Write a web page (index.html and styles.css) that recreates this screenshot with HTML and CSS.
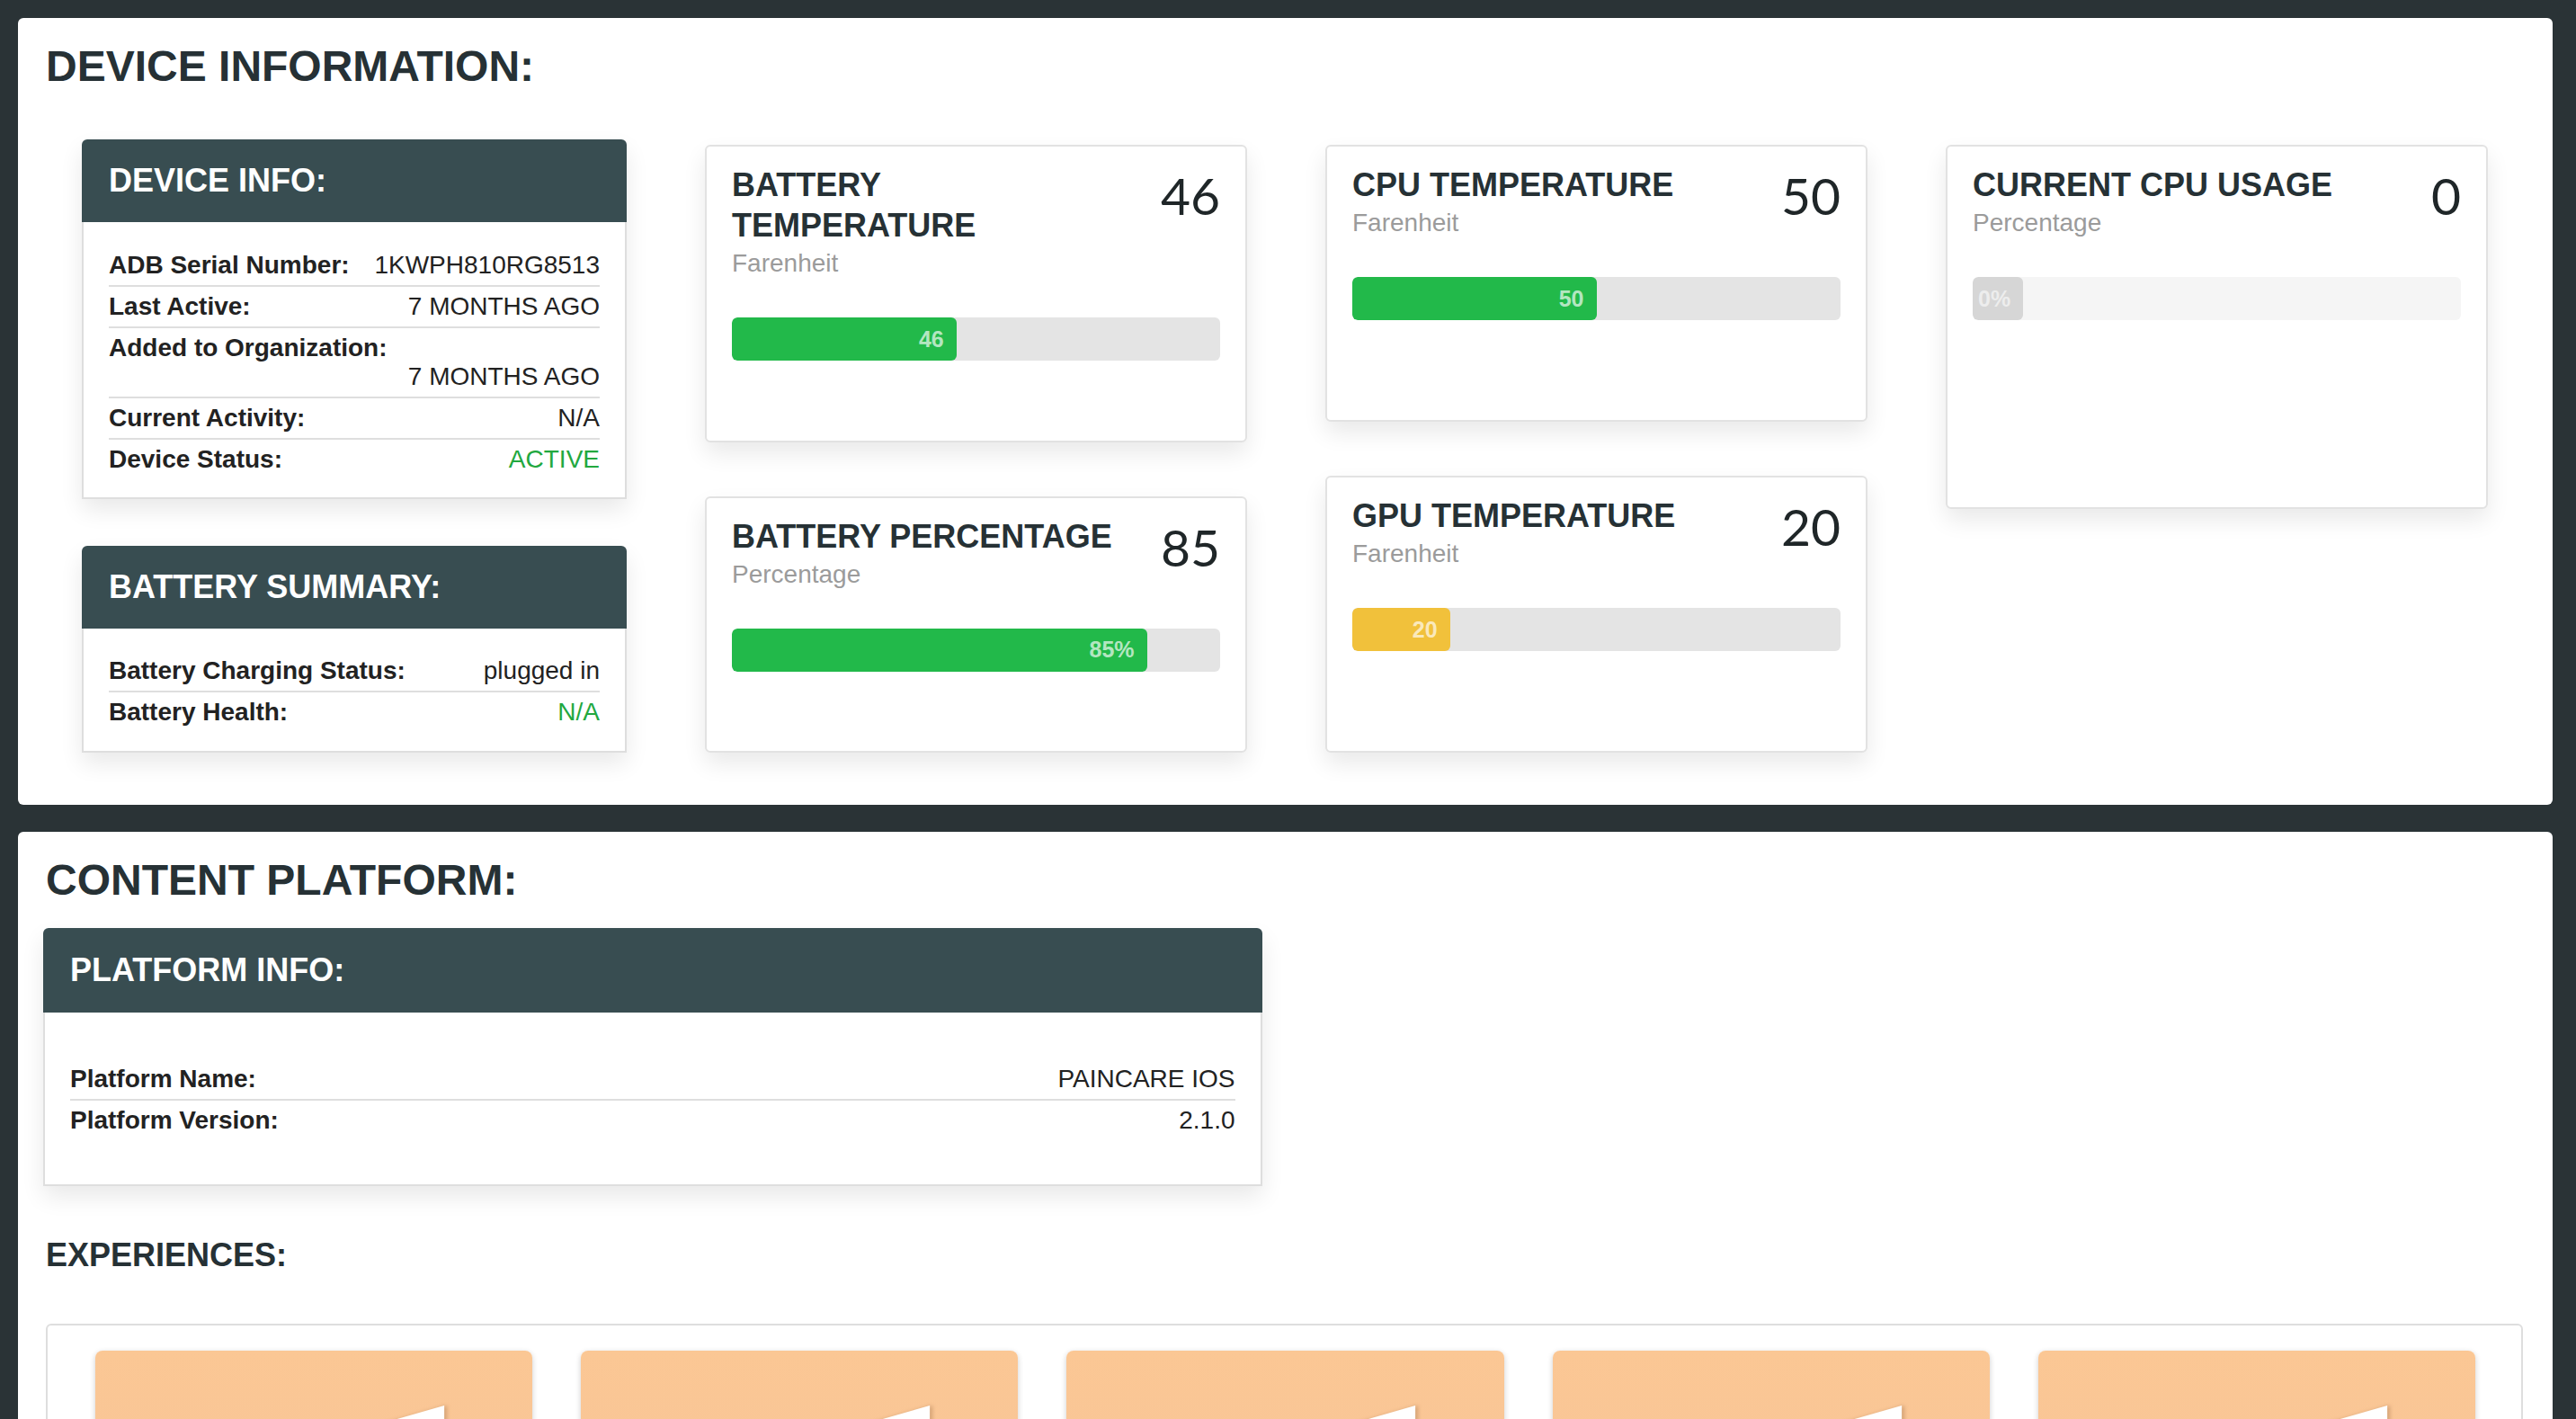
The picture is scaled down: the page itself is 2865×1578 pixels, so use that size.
FILE: index.html
```html
<!DOCTYPE html>
<html lang="en">
<head>
<meta charset="utf-8">
<title>Device</title>
<link rel="stylesheet" href="styles.css">
</head>
<body>
<main class="page">
  <section class="panel panel-device">
    <h1 class="panel-title">DEVICE INFORMATION:</h1>
    <div class="device-grid">
      <div class="col col-info">
        <div class="info-card">
          <div class="info-head">DEVICE INFO:</div>
          <div class="info-body">
            <div class="kv"><span class="k">ADB Serial Number:</span><span class="v">1KWPH810RG8513</span></div>
            <div class="kv"><span class="k">Last Active:</span><span class="v">7 MONTHS AGO</span></div>
            <div class="kv kv-wrap"><span class="k">Added to Organization:</span><span class="v">7 MONTHS AGO</span></div>
            <div class="kv"><span class="k">Current Activity:</span><span class="v">N/A</span></div>
            <div class="kv"><span class="k">Device Status:</span><span class="v v-green">ACTIVE</span></div>
          </div>
        </div>
        <div class="info-card">
          <div class="info-head">BATTERY SUMMARY:</div>
          <div class="info-body info-body-tight">
            <div class="kv"><span class="k">Battery Charging Status:</span><span class="v">plugged in</span></div>
            <div class="kv"><span class="k">Battery Health:</span><span class="v v-green">N/A</span></div>
          </div>
        </div>
      </div>

      <div class="col">
        <div class="metric">
          <div class="metric-head">
            <div class="metric-text">
              <div class="metric-title">BATTERY TEMPERATURE</div>
              <div class="metric-unit">Farenheit</div>
            </div>
            <div class="metric-value">46</div>
          </div>
          <div class="bar"><div class="bar-fill" style="width:46%">46</div></div>
        </div>
        <div class="metric">
          <div class="metric-head">
            <div class="metric-text">
              <div class="metric-title">BATTERY PERCENTAGE</div>
              <div class="metric-unit">Percentage</div>
            </div>
            <div class="metric-value">85</div>
          </div>
          <div class="bar"><div class="bar-fill" style="width:85%">85%</div></div>
        </div>
      </div>

      <div class="col">
        <div class="metric">
          <div class="metric-head">
            <div class="metric-text">
              <div class="metric-title">CPU TEMPERATURE</div>
              <div class="metric-unit">Farenheit</div>
            </div>
            <div class="metric-value">50</div>
          </div>
          <div class="bar"><div class="bar-fill" style="width:50%">50</div></div>
        </div>
        <div class="metric">
          <div class="metric-head">
            <div class="metric-text">
              <div class="metric-title">GPU TEMPERATURE</div>
              <div class="metric-unit">Farenheit</div>
            </div>
            <div class="metric-value">20</div>
          </div>
          <div class="bar"><div class="bar-fill bar-fill-warn" style="width:20%">20</div></div>
        </div>
      </div>

      <div class="col">
        <div class="metric metric-tall">
          <div class="metric-head">
            <div class="metric-text">
              <div class="metric-title">CURRENT CPU USAGE</div>
              <div class="metric-unit">Percentage</div>
            </div>
            <div class="metric-value">0</div>
          </div>
          <div class="bar bar-empty"><div class="bar-fill bar-fill-empty" style="width:0%">0%</div></div>
        </div>
      </div>
    </div>
  </section>

  <section class="panel panel-content">
    <h1 class="panel-title">CONTENT PLATFORM:</h1>
    <div class="info-card platform-card">
      <div class="info-head info-head-platform">PLATFORM INFO:</div>
      <div class="info-body info-body-platform">
        <div class="kv"><span class="k">Platform Name:</span><span class="v">PAINCARE IOS</span></div>
        <div class="kv"><span class="k">Platform Version:</span><span class="v">2.1.0</span></div>
      </div>
    </div>

    <h2 class="sub-title">EXPERIENCES:</h2>
    <div class="exp-box">
      <div class="exp-tile"><svg class="exp-icon" viewBox="0 0 486 400" aria-hidden="true"><polygon points="388,61 388,210 140,132" fill="#ffffff"/></svg></div>
      <div class="exp-tile"><svg class="exp-icon" viewBox="0 0 486 400" aria-hidden="true"><polygon points="388,61 388,210 140,132" fill="#ffffff"/></svg></div>
      <div class="exp-tile"><svg class="exp-icon" viewBox="0 0 486 400" aria-hidden="true"><polygon points="388,61 388,210 140,132" fill="#ffffff"/></svg></div>
      <div class="exp-tile"><svg class="exp-icon" viewBox="0 0 486 400" aria-hidden="true"><polygon points="388,61 388,210 140,132" fill="#ffffff"/></svg></div>
      <div class="exp-tile"><svg class="exp-icon" viewBox="0 0 486 400" aria-hidden="true"><polygon points="388,61 388,210 140,132" fill="#ffffff"/></svg></div>
    </div>
  </section>
</main>
</body>
</html>
```

FILE: styles.css
```css
html, body {
  margin: 0;
  padding: 0;
}

body {
  background: #2a3336;
  font-family: "Liberation Sans", Arial, sans-serif;
  color: #222;
  height: 1578px;
  overflow: hidden;
}

.page {
  padding: 20px 26px 0 20px;
}

.panel {
  background: #fff;
  border-radius: 6px;
  padding: 26px 28px 58px;
}

.panel + .panel {
  margin-top: 30px;
}

.panel-title {
  margin: 0;
  padding-left: 3px;
  font-size: 48px;
  line-height: 55px;
  font-weight: 700;
  color: #263135;
}

/* ---------- device grid ---------- */
.device-grid {
  display: grid;
  grid-template-columns: 607px repeat(3, 1fr);
  column-gap: 87px;
  padding: 0 44px 0 42px;
  margin-top: 54px;
}

.col {
  display: flex;
  flex-direction: column;
  gap: 60px;
  padding-top: 6px;
}

.col-info {
  gap: 52px;
  padding-top: 0;
  padding-left: 1px;
}

/* ---------- info cards ---------- */
.info-card {
  background: #fff;
  border-radius: 6px 6px 0 0;
  box-shadow: 0 12px 26px rgba(0, 0, 0, 0.09);
}

.info-head {
  background: #384d51;
  color: #fff;
  height: 92px;
  display: flex;
  align-items: center;
  padding: 0 30px;
  font-size: 36px;
  font-weight: 700;
  border-radius: 6px 6px 0 0;
}

.info-body {
  border: 2px solid #dedede;
  border-top: 0;
  padding: 26px 28px 20px;
  font-size: 28px;
  color: #222;
}

.info-body-tight {
  padding: 25px 28px 21px;
}

.kv {
  display: flex;
  flex-wrap: wrap;
  justify-content: space-between;
  line-height: 32px;
  padding: 6px 0;
  border-bottom: 2px solid #dedede;
}

.kv:last-child {
  border-bottom: 0;
}

.k {
  font-weight: 700;
}

.kv-wrap .v {
  flex-basis: 100%;
  text-align: right;
}

.v-green {
  color: #22a83f;
}

/* ---------- metric cards ---------- */
.metric {
  background: #fff;
  border: 2px solid #e2e2e2;
  border-radius: 6px;
  padding: 20px 28px 88px;
  flex: 1 1 auto;
  box-shadow: 0 12px 26px rgba(0, 0, 0, 0.09);
}

.metric-tall {
  flex: 0 0 auto;
  min-height: 405px;
  box-sizing: border-box;
}

.metric-head {
  display: flex;
  justify-content: space-between;
  align-items: flex-start;
}

.metric-text {
  max-width: 440px;
}

.metric-title {
  font-size: 36px;
  line-height: 45px;
  font-weight: 700;
  color: #263135;
}

.metric-unit {
  font-size: 28px;
  line-height: 40px;
  color: #9b9b9b;
}

.metric-value {
  font-family: Lato, "Open Sans", sans-serif;
  font-weight: 400;
  font-size: 57px;
  line-height: normal;
  color: #1f2628;
}

.bar {
  margin-top: 40px;
  height: 48px;
  background: #e4e4e4;
  border-radius: 6px;
  display: flex;
  overflow: hidden;
}

.bar-fill {
  background: #22b94a;
  border-radius: 6px;
  display: flex;
  align-items: center;
  justify-content: flex-end;
  padding: 0 14px 0 6px;
  box-sizing: border-box;
  min-width: max-content;
  color: rgba(255, 255, 255, 0.68);
  font-size: 25px;
  font-weight: 700;
}

.bar-fill-warn {
  background: #f1c13b;
}

.bar-empty {
  background: #f5f5f5;
}

.bar-fill-empty {
  background: #d6d6d6;
  color: #ededed;
}

/* ---------- content platform ---------- */
.platform-card {
  width: calc(50% - 26px);
  margin-top: 26px;
}

.info-head-platform {
  height: 94px;
}

.info-body-platform {
  padding: 52px 28px 49px;
}

.sub-title {
  margin: 56px 0 0;
  padding-left: 3px;
  font-size: 36px;
  line-height: 41px;
  font-weight: 700;
  color: #263135;
}

.exp-box {
  margin: 56px 5px 0 3px;
  border: 2px solid #dedede;
  border-radius: 6px;
  padding: 28px 51px 0 53px;
  display: flex;
  gap: 54px;
}

.exp-tile {
  position: relative;
  flex: 1 1 0;
  height: 400px;
  border-radius: 8px;
  background: linear-gradient(180deg, #fbc794 0%, #f3c29d 100%);
  box-shadow: 0 2px 6px rgba(0, 0, 0, 0.2);
}

.exp-icon {
  position: absolute;
  left: 0;
  top: 0;
  width: 100%;
  height: 100%;
  filter: drop-shadow(3px 0 2px rgba(150, 100, 60, 0.35));
}
```
